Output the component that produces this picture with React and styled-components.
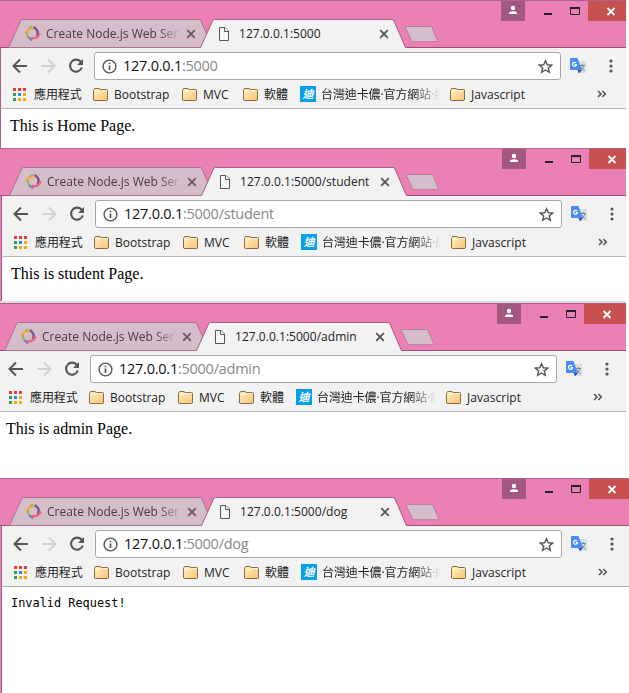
import React from 'react';
import styled, { createGlobalStyle } from 'styled-components';

const Global = createGlobalStyle`
  * { box-sizing: border-box; }
  html, body { margin: 0; background: #fff; overflow: hidden; }
  svg { display: block; flex: none; }
`;

const Page = styled.main`
  width: 629px;
  height: 693px;
  display: flex;
  flex-direction: column;
  overflow: hidden;
  background: #fff;
  font-family: "Open Sans", "Noto Sans CJK TC", sans-serif;
  font-size: 12px;
  color: #222;
`;

const WindowFrame = styled.section`
  flex: none;
  width: ${p => p.$width}px;
  height: ${p => p.$height}px;
  padding-left: ${p => p.$inset}px;
  overflow: hidden;
  background: #ea80b3;
  border-bottom: ${p => (p.$shadow ? '2px solid #dcdcdc' : '0')};
`;

const WindowInner = styled.div`
  height: 100%;
  display: flex;
  flex-direction: column;
  margin-left: ${p => p.$pull}px;
`;

const TitleBar = styled.header`
  height: 48px;
  flex: none;
  display: flex;
  align-items: flex-start;
  justify-content: space-between;
  margin-left: ${p => -p.$inset}px;
  padding-left: ${p => p.$inset + 8}px;
  border-top: 1px solid #b1608b;
  background: linear-gradient(#9c5077, #9c5077) bottom / 100% 1px no-repeat #ea80b3;
`;

const TabStrip = styled.div`
  display: flex;
  padding-top: 18px;
`;

const Tab = styled.div`
  position: relative;
  z-index: ${p => (p.$active ? 2 : 1)};
  width: ${p => (p.$active ? 206 : 200)}px;
  height: 29px;
  margin-left: ${p => (p.$active ? -8 : 0)}px;
  padding: 0 0 0 ${p => (p.$active ? 18 : 16)}px;
  display: flex;
  align-items: center;
`;

const TabShape = styled.svg`
  position: absolute;
  inset: 0;
`;

const TabTitle = styled.span`
  position: relative;
  flex: none;
  width: ${p => (p.$active ? 139 : 139)}px;
  margin-left: ${p => (p.$active ? 9 : 5)}px;
  margin-right: 1px;
  white-space: nowrap;
  line-height: 18px;
  letter-spacing: ${p => (p.$active ? 0.03 : 0.02)}px;
  color: ${p => (p.$active ? '#222' : '#4f3548')};
  -webkit-mask-image: ${p => (p.$active ? 'none' : 'linear-gradient(90deg, #000 112px, transparent 136px)')};
`;

const Glyph = styled.svg`
  position: relative;
`;

const NewTab = styled.svg`
  margin: 7px 0 0 -2px;
`;

const Caption = styled.div`
  display: flex;
  height: 20px;
  width: ${p => p.$closeWidth + 87}px;
`;

const CaptionButton = styled.button`
  border: 0;
  padding: 0;
  width: ${p => p.$width}px;
  height: 20px;
  margin-right: ${p => p.$gap || 0}px;
  background: ${p => p.$fill || 'transparent'};
`;

const Chrome = styled.div`
  flex: none;
  height: 61px;
  border-left: 1px solid #ac5a86;
  border-bottom: 1px solid #b5b5b5;
  background: #f2f2f2;
`;

const Toolbar = styled.div`
  height: 36px;
  display: flex;
  align-items: center;
  padding-left: 11px;
`;

const NavIcon = styled.svg`
  margin-right: 12px;
`;

const AddressBar = styled.div`
  width: 467px;
  height: 28px;
  margin-left: -2px;
  padding: 0 7px 0 7px;
  display: flex;
  align-items: center;
  border: 1px solid #a8a8a8;
  border-radius: 3px;
  background: #fff;
`;

const Url = styled.span`
  flex: 1;
  padding-left: 6px;
  font-size: 14.5px;
  line-height: 24px;
  letter-spacing: -0.25px;
  color: #888;
  b { font-weight: 400; color: #111; }
`;

const Extras = styled.div`
  display: flex;
  align-items: center;
  gap: 23px;
  padding-left: 9px;
`;

const BookmarkBar = styled.nav`
  height: 23px;
  display: flex;
  align-items: center;
  padding: 1px 0 0 12px;
  margin-top: -1px;
  & svg { margin-bottom: 2px; }
`;

const Bookmark = styled.div`
  flex: none;
  width: ${p => p.$width}px;
  height: 22px;
  display: flex;
  align-items: center;
  gap: ${p => p.$gap || 6}px;
`;

const BookmarkLabel = styled.span`
  flex: none;
  white-space: nowrap;
  line-height: 20px;
  letter-spacing: ${p => p.$track || 0}px;
  -webkit-mask-image: ${p => (p.$fade ? 'linear-gradient(90deg, #000 94px, transparent 119px)' : 'none')};
`;

const SiteBadge = styled.span`
  width: 16px;
  height: 16px;
  margin-bottom: 2px;
  background: #06a0e9;
  color: #fff;
  font: italic 700 11px/15px "Noto Sans CJK TC", sans-serif;
  text-align: center;
`;

const Viewport = styled.article`
  flex: 1;
  padding: ${p => (p.$mono ? 9 : 7)}px 0 0 9px;
  border-left: 1px solid #ac5a86;
  border-right: ${p => (p.$edge ? '1px solid #ececec' : '0')};
  background: #fff;
  color: #000;
  font-family: ${p => (p.$mono ? '"DejaVu Sans Mono", monospace' : '"Liberation Serif", serif')};
  font-size: ${p => (p.$mono ? 11.9 : 16)}px;
  line-height: ${p => (p.$mono ? 14 : 20)}px;
`;

const Favicon = () => (
  <Glyph width="17" height="17" viewBox="0 0 17 17" fill="none" strokeWidth="2.3">
    <path d="M1.2 8.5L4.2 4.5Q6.5 2.8 10.5 3.5" stroke="#f6a93b" />
    <path d="M5 3L8 1.2" stroke="#8cba5b" strokeWidth="1.8" />
    <path d="M9.8 1.8L13 5.2Q14.5 7.5 12.8 11.5" stroke="#6f5797" />
    <path d="M16 8.5L13.5 11.8Q11 13.7 7 13" stroke="#f0617c" />
    <path d="M3.2 6.8Q2.5 10.5 4.7 13" stroke="#8cba5b" strokeWidth="2" />
    <path d="M4.2 12L8 15.6" stroke="#7c79b4" strokeWidth="2" />
  </Glyph>
);

const PageIcon = () => (
  <Glyph width="12" height="14" viewBox="0 0 12 14" fill="#f7f7f7" stroke="#555">
    <path d="M1.5.5H7L10.5 4V13.5H1.5Z" />
    <path d="M6.5.5V4.5H10.5" />
  </Glyph>
);

const CloseIcon = ({ active }) => (
  <Glyph width="10" height="10" viewBox="0 0 10 10" fill="none" stroke={active ? '#555' : '#6d5667'} strokeWidth="1.8">
    <path d="M1.2 1.2L8.8 8.8M8.8 1.2L1.2 8.8" />
  </Glyph>
);

const Folder = () => (
  <svg width="15" height="13" viewBox="0 0 15 13">
    <defs>
      <linearGradient id="folder" x1="0" y1="0" x2="1" y2="1">
        <stop offset="0" stopColor="#fff0c4" />
        <stop offset="1" stopColor="#f8c475" />
      </linearGradient>
    </defs>
    <path d="M.5 12V2.5L1.5.5H6L7.2 1.5H13.5Q14.5 1.5 14.5 2.5V12L13.8 12.5H1.2Z" fill="url(#folder)" stroke="#8d6a40" />
    <path d="M1.5 3.5H6L7.5 2.5H13.5" stroke="#fff4d6" fill="none" />
  </svg>
);

const appColors = ['#ef3a36', '#ef3a36', '#ef3a36', '#2f9e5b', '#2d87f0', '#f7a90c', '#2f9e5b', '#f7a90c', '#f7a90c'];

const AppsGrid = styled.span`
  flex: none;
  display: grid;
  grid-template-columns: repeat(3, 3px);
  grid-auto-rows: 3px;
  gap: 2px;
  margin-bottom: 1px;
`;

const AppDot = styled.i`
  background: ${p => p.$color};
`;

const AppsIcon = () => (
  <AppsGrid>
    {appColors.map((c, i) => <AppDot key={i} $color={c} />)}
  </AppsGrid>
);

const TranslateIcon = () => (
  <svg width="16" height="16" viewBox="0 0 16 16">
    <path d="M6 3H16V15H9Z" fill="#dcdfe2" />
    <path d="M10 7.5H15M12.3 6V7.5M14 7.5C13.5 10 12 11.5 10.5 12.5M11 8.5C11.6 10.5 12.7 12 14.5 12.8" stroke="#6e8a96" fill="none" />
    <path d="M0 1Q0 0 1 0H7.5L11.8 12H1Q0 12 0 11Z" fill="#4b8bf5" />
    <path d="M7.5 12H11.8L9 15.5Z" fill="#3049bd" />
    <path d="M6 5A2 2 0 1 0 6.5 6.6H4.6" stroke="#fff" strokeWidth="1.2" fill="none" />
  </svg>
);

function BrowserTab({ active, title }) {
  return (
    <Tab $active={active}>
      <TabShape width={active ? 206 : 205} height="29" viewBox={active ? '0 0 206 29' : '0 0 205 29'}>
        {active ? (
          <>
            <path d="M.5 29L12.5 2Q13 .5 14.5 .5H192Q193.5 .5 194 2L205.5 29Z" fill="#f2f2f2" />
            <path d="M.5 28.5L12.5 2Q13 .5 14.5 .5H192Q193.5 .5 194 2L205.5 28.5" fill="none" stroke="#a65a84" />
          </>
        ) : (
          <path d="M.5 28.5L12.5 2Q13 .5 14.5 .5H191Q192.5 .5 193 2L204.5 28.5Z" fill="#d5bdca" stroke="#a9708f" />
        )}
      </TabShape>
      {active ? <PageIcon /> : <Favicon />}
      <TabTitle $active={active}>{title}</TabTitle>
      <CloseIcon active={active} />
    </Tab>
  );
}

function BrowserWindow({ path, message, inset = 0, pull = 0, width = 626, height, closeWidth = 38, mono, edge, shadow }) {
  return (
    <WindowFrame $width={width} $height={height} $inset={inset} $shadow={shadow}>
      <WindowInner $pull={pull}>
        <TitleBar $inset={inset}>
          <TabStrip>
            <BrowserTab title="Create Node.js Web Ser" />
            <BrowserTab active title={`127.0.0.1:5000${path}`} />
            <NewTab width="35" height="17" viewBox="0 0 35 17">
              <path d="M2.5 .5H26Q27.5 .5 28 1.5L33.5 14.5Q34 15.7 32.5 15.7H9.5Q8 15.7 7.5 14.5L1.5 2Q1 .5 2.5 .5Z" fill="#d5bdca" stroke="#b77d9d" />
            </NewTab>
          </TabStrip>
          <Caption $closeWidth={closeWidth}>
            <CaptionButton $width={24} $gap={12} $fill="#a3587f" aria-label="Profile">
              <svg width="24" height="20" viewBox="0 0 24 20" fill="#fff">
                <circle cx="12" cy="7" r="2.2" />
                <path d="M8 13V12Q8 10.3 12 10.3T16 12V13Z" />
              </svg>
            </CaptionButton>
            <CaptionButton $width={24} aria-label="Minimize">
              <svg width="24" height="20" viewBox="0 0 24 20"><path d="M7 13H15" stroke="#222" strokeWidth="2" /></svg>
            </CaptionButton>
            <CaptionButton $width={27} aria-label="Maximize">
              <svg width="27" height="20" viewBox="0 0 27 20" fill="none" stroke="#222">
                <path d="M9.5 6V13.5H18.5V6" /><path d="M9 7H19" strokeWidth="2" />
              </svg>
            </CaptionButton>
            <CaptionButton $width={closeWidth} $fill="#c75050" aria-label="Close">
              <svg width="37" height="20" viewBox="0 0 37 20" stroke="#fff" strokeWidth="1.8">
                <path d="M19.5 7L26.5 14M26.5 7L19.5 14" />
              </svg>
            </CaptionButton>
          </Caption>
        </TitleBar>
        <Chrome>
          <Toolbar>
            <NavIcon width="16" height="16" viewBox="0 0 16 16" fill="none" stroke="#555" strokeWidth="2"><path d="M15 8H2M8 1.5L1.5 8L8 14.5" /></NavIcon>
            <NavIcon width="16" height="16" viewBox="0 0 16 16" fill="none" stroke="#d2d2d2" strokeWidth="2"><path d="M1 8H14M8 1.5L14.5 8L8 14.5" /></NavIcon>
            <NavIcon width="16" height="16" viewBox="0 0 16 16">
              <path d="M13 4.2A6 6 0 1 0 13.8 9.5" fill="none" stroke="#555" strokeWidth="2.1" />
              <path d="M15 1V7H9Z" fill="#555" />
            </NavIcon>
            <AddressBar>
              <svg width="15" height="15" viewBox="0 0 15 15" fill="none" stroke="#555">
                <circle cx="7.5" cy="7.5" r="6.4" strokeWidth="1.4" />
                <path d="M7.5 6.5V11M7.5 3.7V5.3" strokeWidth="1.7" />
              </svg>
              <Url><b>127.0.0.1</b>:5000{path}</Url>
              <svg width="15" height="15" viewBox="0 0 16 16" fill="none" stroke="#555" strokeWidth="1.5">
                <path d="M8 1.8L9.9 6.1L14.6 6.5L11 9.6L12.1 14.2L8 11.7L3.9 14.2L5 9.6L1.4 6.5L6.1 6.1Z" />
              </svg>
            </AddressBar>
            <Extras>
              <TranslateIcon />
              <svg width="4" height="14" viewBox="0 0 4 14" fill="#555">
                <circle cx="2" cy="2" r="1.6" /><circle cx="2" cy="7" r="1.6" /><circle cx="2" cy="12" r="1.6" />
              </svg>
            </Extras>
          </Toolbar>
          <BookmarkBar>
            <Bookmark $width={80} $gap={8}><AppsIcon /><BookmarkLabel $track={-0.1}>應用程式</BookmarkLabel></Bookmark>
            <Bookmark $width={89}><Folder /><BookmarkLabel>Bootstrap</BookmarkLabel></Bookmark>
            <Bookmark $width={61}><Folder /><BookmarkLabel>MVC</BookmarkLabel></Bookmark>
            <Bookmark $width={57}><Folder /><BookmarkLabel>軟體</BookmarkLabel></Bookmark>
            <Bookmark $width={150} $gap={5}><SiteBadge>迪</SiteBadge><BookmarkLabel $fade $track={-0.1}>台灣迪卡儂·官方網站·網</BookmarkLabel></Bookmark>
            <Bookmark $width={147}><Folder /><BookmarkLabel $track={0.05}>Javascript</BookmarkLabel></Bookmark>
            <svg width="10" height="8" viewBox="0 0 10 8" fill="none" stroke="#555" strokeWidth="1.6"><path d="M1 1L4 4L1 7M5.3 1L8.3 4L5.3 7" /></svg>
          </BookmarkBar>
        </Chrome>
        <Viewport $mono={mono} $edge={edge}>{message}</Viewport>
      </WindowInner>
    </WindowFrame>
  );
}

export default function App() {
  return (
    <>
      <Global />
      <Page>
        <BrowserWindow path="" message="This is Home Page." height={148} />
        <BrowserWindow path="/student" message="This is student Page." inset={1} height={155} closeWidth={37} shadow />
        <BrowserWindow path="/admin" message="This is admin Page." pull={-4} height={175} closeWidth={42} edge />
        <BrowserWindow path="/dog" message="Invalid Request!" inset={1} width={629} height={215} closeWidth={40} mono />
      </Page>
    </>
  );
}
